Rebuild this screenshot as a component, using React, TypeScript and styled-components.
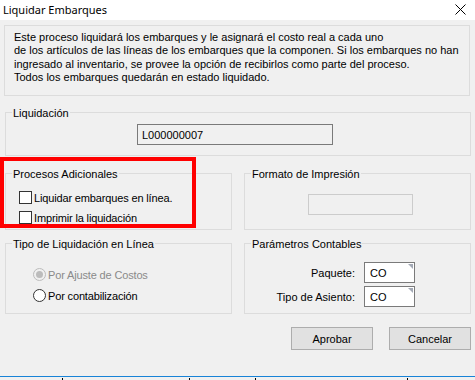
import React from "react";
import styled, { createGlobalStyle } from "styled-components";

const GlobalStyle = createGlobalStyle`
  html, body {
    margin: 0;
    padding: 0;
    background: #f0f0f0;
  }
  body {
    font-family: "Liberation Sans", Arial, sans-serif;
    font-size: 11px;
    color: #000;
  }
`;

const Window = styled.div`
  width: 475px;
  height: 380px;
  background: #f0f0f0;
  display: flex;
  flex-direction: column;
  overflow: hidden;
`;

const TitleBar = styled.div`
  height: 20px;
  background: #fff;
  display: flex;
  align-items: center;
  justify-content: space-between;
  padding: 0 9px 1px 3px;
  box-sizing: border-box;
  font-family: "Noto Sans", "Open Sans", sans-serif;
  font-size: 11px;
`;

const Body = styled.div`
  display: flex;
  flex-direction: column;
  padding-left: 4px;
`;

const InfoBox = styled.div`
  margin-top: 5px;
  width: 466px;
  height: 71px;
  box-sizing: border-box;
  border: 1px solid #dcdcdc;
  padding: 5px 0 0 9px;
  line-height: 13.3px;
`;

const GroupBox = styled.div<{ $w: number; $h: number; $mt: number }>`
  position: relative;
  width: ${(p) => p.$w}px;
  height: ${(p) => p.$h}px;
  margin-top: ${(p) => p.$mt}px;
  box-sizing: border-box;
  border: 1px solid #dcdcdc;
`;

const Caption = styled.span`
  position: absolute;
  top: -6px;
  left: 6px;
  padding: 0 1px;
  line-height: 13px;
  background: #f0f0f0;
  white-space: nowrap;
`;

const TextField = styled.div<{ $w: number; $disabled?: boolean }>`
  width: ${(p) => p.$w}px;
  height: 21px;
  box-sizing: border-box;
  border: 1px solid ${(p) => (p.$disabled ? "#cccccc" : "#7a7a7a")};
  background: ${(p) => (p.$disabled ? "#f0f0f0" : "#fff")};
  display: flex;
  align-items: center;
  padding-left: 4px;
`;

const LiquidacionField = styled(TextField)`
  margin: 11px 0 0 131px;
  background: #f0f0f0;
`;

const FormatoField = styled(TextField)`
  margin: 20px 0 0 63px;
`;

const Row = styled.div<{ $mt: number }>`
  display: grid;
  grid-template-columns: 227px 227px;
  column-gap: 12px;
  margin-top: ${(p) => p.$mt}px;
  margin-left: 1px;
`;

const Cell = styled.div`
  position: relative;
`;

const Highlight = styled.div`
  position: absolute;
  left: -5px;
  top: -16px;
  width: 196px;
  height: 71px;
  box-sizing: border-box;
  border: 4px solid #ff0000;
  pointer-events: none;
`;

const OptionList = styled.div<{ $pt: number; $pl: number; $gap: number }>`
  display: flex;
  flex-direction: column;
  gap: ${(p) => p.$gap}px;
  padding: ${(p) => p.$pt}px 0 0 ${(p) => p.$pl}px;
`;

const Option = styled.label<{ $disabled?: boolean }>`
  display: flex;
  align-items: center;
  gap: 2px;
  height: 13px;
  color: ${(p) => (p.$disabled ? "#8a8a8a" : "#000")};
  white-space: nowrap;
  letter-spacing: -0.15px;
`;

const CheckBox = styled.span`
  width: 13px;
  height: 13px;
  box-sizing: border-box;
  border: 1px solid #333;
  background: #fff;
  flex: none;
`;

const Radio = styled.span<{ $disabled?: boolean; $checked?: boolean }>`
  width: 13px;
  height: 13px;
  box-sizing: border-box;
  border-radius: 50%;
  border: 1px solid ${(p) => (p.$disabled ? "#bcbcbc" : "#333")};
  background: ${(p) => (p.$disabled ? "#f0f0f0" : "#fff")};
  display: flex;
  align-items: center;
  justify-content: center;
  flex: none;
  &::after {
    content: "";
    display: ${(p) => (p.$checked ? "block" : "none")};
    width: 7px;
    height: 7px;
    border-radius: 50%;
    background: ${(p) => (p.$disabled ? "#bcbcbc" : "#333")};
  }
`;

const ParamGrid = styled.div`
  display: grid;
  grid-template-columns: 110px 51px;
  column-gap: 9px;
  row-gap: 3px;
  padding-top: 18px;
  align-items: center;
`;

const ParamLabel = styled.span`
  text-align: right;
  white-space: nowrap;
`;

const CodeField = styled(TextField)`
  position: relative;
  padding-left: 5px;
  &::after {
    content: "";
    position: absolute;
    top: 1px;
    right: 1px;
    border-top: 5px solid #a3a9b5;
    border-left: 5px solid transparent;
  }
`;

const ButtonRow = styled.div`
  display: flex;
  justify-content: flex-end;
  gap: 16px;
  margin-top: 13px;
  padding-right: 4px;
`;

const Button = styled.button`
  width: 82px;
  height: 23px;
  box-sizing: border-box;
  border: 1px solid #adadad;
  background: #e1e1e1;
  font-family: "Liberation Sans", Arial, sans-serif;
  font-size: 11px;
  color: #000;
  padding: 0;
`;

const Footer = styled.svg`
  display: block;
  margin-top: auto;
  flex: none;
`;

export default function App() {
  return (
    <>
      <GlobalStyle />
      <Window>
        <TitleBar>
          <span>Liquidar Embarques</span>
          <svg width="11" height="11" viewBox="0 0 11 11">
            <path d="M0.5 0.5 L10.5 10.5 M10.5 0.5 L0.5 10.5" stroke="#000" strokeWidth="1" />
          </svg>
        </TitleBar>
        <Body>
          <InfoBox>
            Este proceso liquidará los embarques y le asignará el costo real a cada uno
            <br />
            de los artículos de las líneas de los embarques que la componen. Si los embarques no han
            <br />
            ingresado al inventario, se provee la opción de recibirlos como parte del proceso.
            <br />
            Todos los embarques quedarán en estado liquidado.
          </InfoBox>

          <GroupBox $w={466} $h={44} $mt={16} style={{ marginLeft: 1 }}>
            <Caption>Liquidación</Caption>
            <LiquidacionField $w={196}>L000000007</LiquidacionField>
          </GroupBox>

          <Row $mt={17}>
            <Cell>
              <GroupBox $w={227} $h={57} $mt={0}>
                <Caption>Procesos Adicionales</Caption>
                <OptionList $pt={17} $pl={13} $gap={7}>
                  <Option>
                    <CheckBox />
                    Liquidar embarques en línea.
                  </Option>
                  <Option>
                    <CheckBox />
                    Imprimir la liquidación
                  </Option>
                </OptionList>
              </GroupBox>
              <Highlight />
            </Cell>
            <Cell>
              <GroupBox $w={227} $h={57} $mt={0}>
                <Caption>Formato de Impresión</Caption>
                <FormatoField $w={105} $disabled />
              </GroupBox>
            </Cell>
          </Row>

          <Row $mt={13}>
            <GroupBox $w={227} $h={71} $mt={0}>
              <Caption>Tipo de Liquidación en Línea</Caption>
              <OptionList $pt={24} $pl={27} $gap={8}>
                <Option $disabled>
                  <Radio $disabled $checked />
                  Por Ajuste de Costos
                </Option>
                <Option>
                  <Radio />
                  Por contabilización
                </Option>
              </OptionList>
            </GroupBox>
            <GroupBox $w={227} $h={71} $mt={0}>
              <Caption>Parámetros Contables</Caption>
              <ParamGrid>
                <ParamLabel>Paquete:</ParamLabel>
                <CodeField $w={51}>CO</CodeField>
                <ParamLabel>Tipo de Asiento:</ParamLabel>
                <CodeField $w={51}>CO</CodeField>
              </ParamGrid>
            </GroupBox>
          </Row>

          <ButtonRow>
            <Button>Aprobar</Button>
            <Button>Cancelar</Button>
          </ButtonRow>
        </Body>
        <Footer width="475" height="4" viewBox="0 0 475 4">
          <rect x="0" y="0" width="475" height="4" fill="#f0f0f0" />
          <rect x="0" y="0" width="475" height="1" fill="#1883d7" />
          <rect x="62" y="2" width="1" height="2" fill="#000" />
          <rect x="189" y="2" width="1" height="2" fill="#000" />
          <rect x="255" y="2" width="1" height="2" fill="#000" />
          <rect x="407" y="2" width="1" height="2" fill="#000" />
        </Footer>
      </Window>
    </>
  );
}
